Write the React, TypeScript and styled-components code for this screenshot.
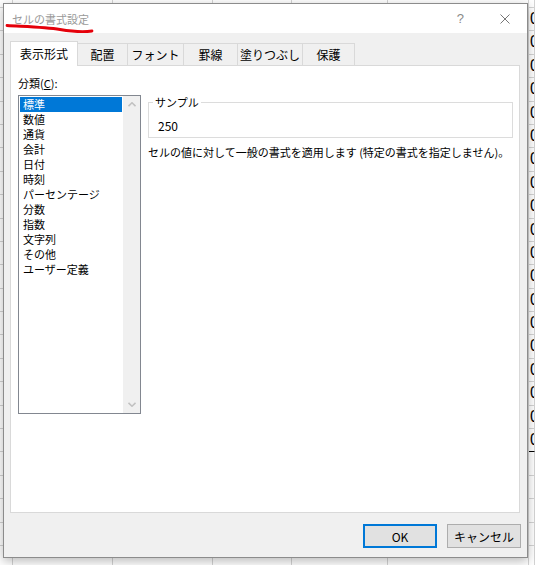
import React from "react";
import styled, { createGlobalStyle } from "styled-components";

const GlobalStyle = createGlobalStyle`
  html, body {
    margin: 0;
    padding: 0;
    background: #fff;
  }
  body {
    font-family: "Noto Sans CJK JP", "Noto Sans", sans-serif;
    color: #000;
  }
  * {
    box-sizing: border-box;
  }
`;

// 背景のシート
const Screen = styled.div`
  position: relative;
  width: 535px;
  height: 565px;
  overflow: hidden;
`;

const Sheet = styled.div`
  display: grid;
  grid-template-columns: 13px 100px 100px 79px 96px 141px 1fr;
  grid-template-rows: 8px repeat(24, 23.4px);
  width: 100%;
  height: 100%;
`;

const Cell = styled.div<{ $edge?: boolean }>`
  border-right: 1px solid #d4d4d4;
  border-bottom: 1px solid ${(p) => (p.$edge ? "#000" : "#d4d4d4")};
  padding-left: 1px;
  overflow: hidden;
  font-family: "Liberation Sans", Arial, sans-serif;
  font-size: 16px;
  line-height: 22px;
  color: #000;
`;

// ダイアログ
const Dialog = styled.div`
  position: absolute;
  left: 3px;
  top: 3px;
  width: 525px;
  height: 555px;
  display: flex;
  flex-direction: column;
  background: #f0f0f0;
  border: 1px solid #8c8c8c;
  box-shadow: 0 3px 10px rgba(0, 0, 0, 0.28);
`;

const TitleBar = styled.div`
  flex: none;
  height: 29px;
  display: flex;
  align-items: center;
  padding-left: 8px;
  background: #fff;
`;

const Title = styled.span`
  flex: 1;
  font-size: 11px;
  color: #9a9a9a;
`;

const Help = styled.span`
  font-family: "Liberation Sans", Arial, sans-serif;
  font-size: 13px;
  color: #8a8a8a;
  margin-right: 36px;
`;

const CloseIcon = styled.svg`
  margin-right: 17px;
`;

const Body = styled.div`
  flex: 1;
  display: flex;
  flex-direction: column;
  padding: 8px 6px 9px 6px;
  min-height: 0;
`;

const TabRow = styled.div`
  display: flex;
  align-items: flex-end;
  height: 25px;
  margin-bottom: -1px;
  position: relative;
  z-index: 1;
`;

const Tab = styled.div<{ $active?: boolean; $w: number }>`
  width: ${(p) => p.$w}px;
  height: ${(p) => (p.$active ? 25 : 23)}px;
  display: flex;
  align-items: center;
  justify-content: center;
  padding-bottom: 1px;
  border: 1px solid #d9d9d9;
  border-bottom: none;
  background: ${(p) => (p.$active ? "#fff" : "transparent")};
  position: relative;
  z-index: ${(p) => (p.$active ? 2 : 1)};
  font-size: 12px;
  color: #000;
  & + & {
    margin-left: -1px;
  }
`;

const Panel = styled.div`
  flex: 1;
  margin-right: 1px;
  background: #fff;
  border: 1px solid #d9d9d9;
  padding: 10px 6px 0 7px;
  display: grid;
  grid-template-columns: 123px 1fr;
  grid-template-rows: auto auto;
  column-gap: 7px;
  row-gap: 4px;
  align-content: start;
`;

const Label = styled.div`
  grid-column: 1 / -1;
  font-size: 11px;
  line-height: 15px;
`;

const ListBox = styled.div`
  height: 319px;
  display: flex;
  border: 1px solid #828790;
  background: #fff;
`;

const Items = styled.ul`
  flex: 1;
  list-style: none;
  margin: 0;
  padding: 1px 1px 0 1px;
`;

const Item = styled.li<{ $selected?: boolean }>`
  height: 15px;
  line-height: 15px;
  padding-left: 3px;
  font-size: 11px;
  white-space: nowrap;
  background: ${(p) => (p.$selected ? "#0078d7" : "transparent")};
  color: ${(p) => (p.$selected ? "#fff" : "#000")};
`;

const ScrollTrack = styled.div`
  width: 17px;
  display: flex;
  flex-direction: column;
  justify-content: space-between;
  align-items: center;
  padding: 6px 0;
  background: #f0f0f0;
`;

const RightColumn = styled.div`
  display: flex;
  flex-direction: column;
  min-width: 0;
`;

const SampleBox = styled.fieldset`
  margin: 0;
  min-width: 0;
  padding: 8px 9px 4px;
  border: 1px solid #dcdcdc;
`;

const SampleLegend = styled.legend`
  margin-left: -5px;
  padding: 0 2px;
  font-size: 11px;
  line-height: 15px;
`;

const SampleValue = styled.div`
  font-size: 12px;
  line-height: 15px;
`;

const Description = styled.p`
  margin: 7px 0 0;
  font-size: 11px;
  line-height: 15px;
  white-space: nowrap;
`;

const ButtonRow = styled.div`
  display: flex;
  justify-content: flex-end;
  gap: 10px;
  margin-top: 11px;
`;

const Button = styled.button<{ $primary?: boolean }>`
  width: 74px;
  height: 24px;
  padding: 0;
  background: #e1e1e1;
  border: ${(p) => (p.$primary ? "2px solid #0078d7" : "1px solid #adadad")};
  font-family: "Noto Sans CJK JP", "Noto Sans", sans-serif;
  font-size: 12px;
  color: #000;
`;

// 手書きの赤線
const Scribble = styled.svg`
  position: absolute;
  left: 0;
  top: 0;
  pointer-events: none;
`;

const columns = 7;
const rows = 25;
const categories = [
  "標準",
  "数値",
  "通貨",
  "会計",
  "日付",
  "時刻",
  "パーセンテージ",
  "分数",
  "指数",
  "文字列",
  "その他",
  "ユーザー定義",
];
const tabs: [string, number][] = [
  ["表示形式", 68],
  ["配置", 51],
  ["フォント", 57],
  ["罫線", 55],
  ["塗りつぶし", 66],
  ["保護", 53],
];

const Chevron: React.FC<{ down?: boolean }> = ({ down }) => (
  <svg width="8" height="5" viewBox="0 0 8 5">
    <polyline
      points={down ? "0.5,0.8 4,4.2 7.5,0.8" : "0.5,4.2 4,0.8 7.5,4.2"}
      fill="none"
      stroke="#c2c2c2"
      strokeWidth="1.6"
    />
  </svg>
);

const App: React.FC = () => {
  const cells = [];
  for (let r = 0; r < rows; r++) {
    for (let c = 0; c < columns; c++) {
      const filled = c === columns - 1 && r >= 1 && r <= 19;
      cells.push(
        <Cell key={`${r}-${c}`} $edge={c === columns - 1 && r === 19}>
          {filled ? "0" : ""}
        </Cell>
      );
    }
  }

  return (
    <Screen>
      <GlobalStyle />
      <Sheet>{cells}</Sheet>

      <Dialog>
        <TitleBar>
          <Title>セルの書式設定</Title>
          <Help>?</Help>
          <CloseIcon width="10" height="10" viewBox="0 0 10 10">
            <path d="M0.5 0.5 L9.5 9.5 M9.5 0.5 L0.5 9.5" stroke="#777" strokeWidth="1" />
          </CloseIcon>
        </TitleBar>

        <Body>
          <TabRow>
            {tabs.map(([name, w], i) => (
              <Tab key={name} $w={w} $active={i === 0}>
                {name}
              </Tab>
            ))}
          </TabRow>

          <Panel>
            <Label>
              分類(<u>C</u>):
            </Label>
            <ListBox>
              <Items>
                {categories.map((c, i) => (
                  <Item key={c} $selected={i === 0}>
                    {c}
                  </Item>
                ))}
              </Items>
              <ScrollTrack>
                <Chevron />
                <Chevron down />
              </ScrollTrack>
            </ListBox>
            <RightColumn>
              <SampleBox>
                <SampleLegend>サンプル</SampleLegend>
                <SampleValue>250</SampleValue>
              </SampleBox>
              <Description>
                セルの値に対して一般の書式を適用します (特定の書式を指定しません)。
              </Description>
            </RightColumn>
          </Panel>

          <ButtonRow>
            <Button $primary>OK</Button>
            <Button>キャンセル</Button>
          </ButtonRow>
        </Body>
      </Dialog>

      <Scribble width="100" height="40" viewBox="0 0 100 40">
        <path
          d="M7 25.5 C 22 26.5, 45 27, 60 29.5 S 82 32.5, 92 31"
          fill="none"
          stroke="#e5000a"
          strokeWidth="2.8"
          strokeLinecap="round"
        />
      </Scribble>
    </Screen>
  );
};

export default App;
